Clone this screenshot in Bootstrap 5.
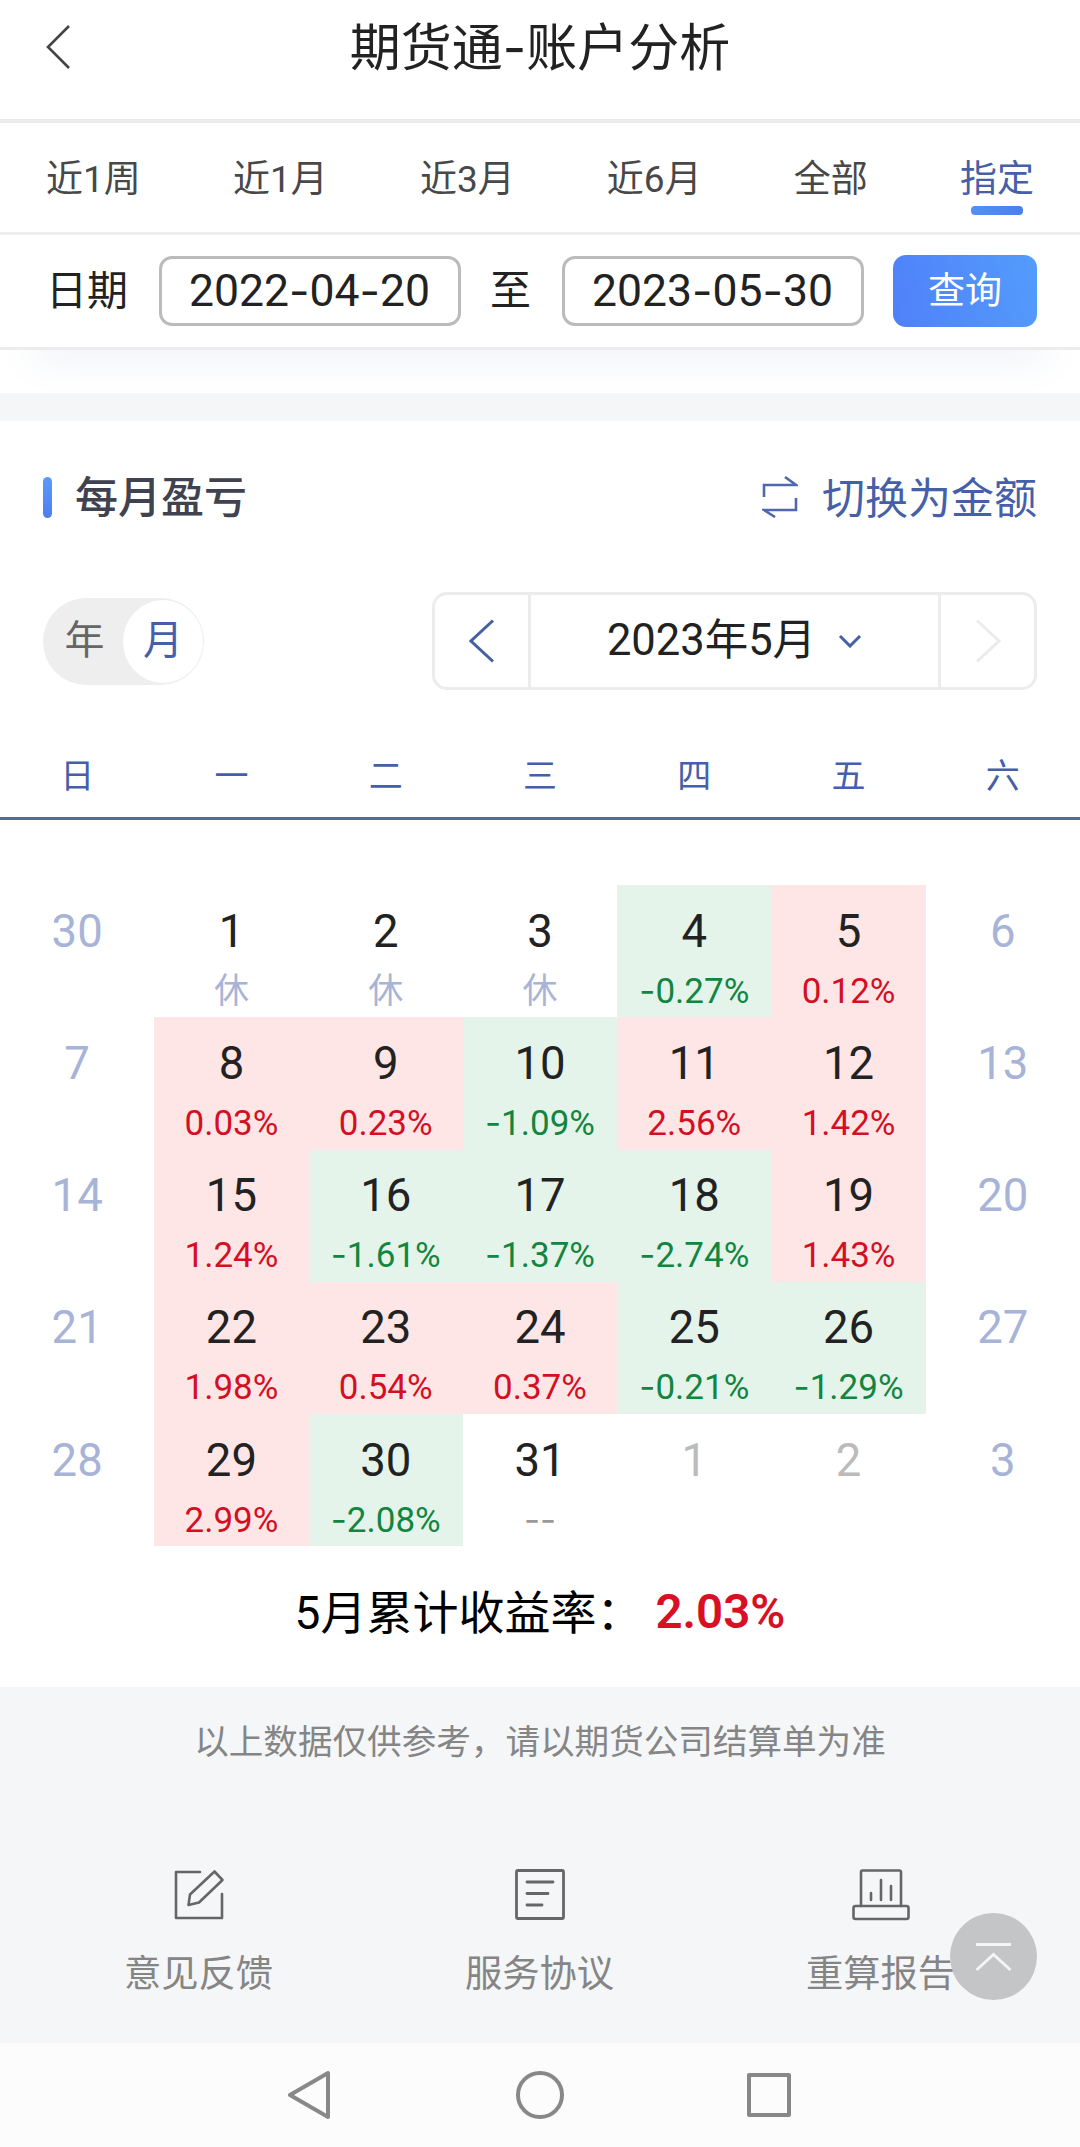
<!DOCTYPE html>
<html lang="zh-CN">
<head>
<meta charset="utf-8">
<meta name="viewport" content="width=device-width, initial-scale=1">
<title>期货通-账户分析</title>
<link rel="stylesheet" href="https://cdn.jsdelivr.net/npm/bootstrap@5.3.0/dist/css/bootstrap.min.css">
<style>
body{font-family:Roboto,"Noto Sans CJK SC",sans-serif;color:#222;background:#fff;width:1080px;overflow-x:hidden;line-height:1}
svg{display:block;fill:none;flex:none}
.hy{font-family:Inter,sans-serif;line-height:0}
.blue{color:#4560a8}
.app-head{height:123px;border-bottom:4px solid #ebebeb;padding:0 46px 25px}
.app-head .ttl{font-size:51px;color:#222;padding-top:2px}
.tabs{height:112px;border-bottom:3px solid #eee;padding:0 46px;font-size:37px;color:#484848}
.tabs .tab{height:100%;padding-top:3px}
.tabs .on::after{content:"";position:absolute;left:50%;bottom:17px;width:52px;height:9px;margin-left:-26px;border-radius:4px;background:linear-gradient(90deg,#5290f5,#4d7df0)}
.filter{height:115px;border-bottom:3px solid #ececec;padding:0 43px 0 46px;font-size:41px}
.date-box{width:302px;height:70px;border:3px solid #bbb;border-radius:13px;font-size:44.5px;margin-right:-1px}
.go{width:144px;height:72px;border:0;border-radius:13px;font-size:37px;color:#fff;background:linear-gradient(75deg,#5080fa,#539cfc)}
.fade-strip{height:43px;padding:0 40px;overflow:hidden}
.fade-strip div{height:10px;margin-top:-10px;box-shadow:0 4px 36px 6px rgba(90,120,180,.12)}
.band{height:28px;background:#f4f6f8}
.sec-head{height:150px;padding:2px 43px 0;font-size:43px}
.sec-head .bar{width:9px;height:41px;border-radius:5px;background:linear-gradient(#5a9bfa,#4f7cf0);margin-right:23px}
.sec-head .name{font-weight:500;color:#40424f;padding-top:2px}
.picker-row{height:140px;padding:0 43px}
.seg{width:161px;height:87px;border-radius:44px;background:#eee;font-size:40px;color:#666}
.seg .knob{width:80px;height:83px;border-radius:50%;background:#fff;margin-right:1px}
.seg .yr{padding-left:3px}
.month{width:605px;height:98px;border:3px solid #ececec;border-radius:15px}
.month .arrow{width:93px}
.month .mid{border-left:3px solid #ececec;border-right:3px solid #ececec;font-size:43.5px}
.month .mid svg{margin-left:22px}
.cols{display:grid;grid-template-columns:repeat(7,1fr)}
.week{height:109px;border-bottom:3px solid #566a95;font-size:34px;padding-top:24px}
.cal{padding-top:65px;grid-auto-rows:132.3px}
.day{padding-top:23.500px}
.day .num{font-size:45.5px;height:46px;line-height:46px}
.day .rate{font-size:35px;height:36px;line-height:36px;margin-top:19px}
.up{background:#fee6e7}.up .rate{color:#d40f24}
.down{background:#e5f4eb}.down .rate{color:#128540}
.rest .rate,.off{color:#a7b4d8}
.next{color:#bbb}.none .rate{color:#999}
.total{height:141px;font-size:46px;color:#000;padding-bottom:8px}
.total b{color:#d90f24;font-size:47.5px;font-weight:600;margin-left:13px}
.foot{height:355.500px;background:#f5f6f8;color:#858585}
.note{height:105px;font-size:34.6px;padding-top:4px}
.links{padding:76px 28px 0;font-size:37.3px}
.links a{color:inherit;text-decoration:none;width:341px}
.links svg{height:54px;width:60px;margin-bottom:34px}
.totop{right:43px;top:226px;width:87px;height:87px;border-radius:50%;background:rgba(190,192,192,.9)}
.sysbar{height:104px;background:#fcfcfc;padding-top:1px}
</style>
</head>
<body>
<header class="app-head d-flex align-items-center">
  <svg width="24" height="44" viewBox="0 0 24 44" stroke="#444" stroke-width="2.6"><path d="M23 1 2 22l21 21"/></svg>
  <div class="ttl flex-fill text-center">期货通<span class="hy">-</span>账户分析</div>
  <span style="width:24px"></span>
</header>
<nav class="tabs d-flex justify-content-between">
  <div class="tab d-flex align-items-center">近1周</div>
  <div class="tab d-flex align-items-center">近1月</div>
  <div class="tab d-flex align-items-center">近3月</div>
  <div class="tab d-flex align-items-center">近6月</div>
  <div class="tab d-flex align-items-center">全部</div>
  <div class="tab on blue position-relative d-flex align-items-center">指定</div>
</nav>
<div class="filter d-flex align-items-center justify-content-between">
  <span>日期</span>
  <div class="date-box d-flex align-items-center justify-content-center">2022<span class="hy">-</span>04<span class="hy">-</span>20</div>
  <span>至</span>
  <div class="date-box d-flex align-items-center justify-content-center">2023<span class="hy">-</span>05<span class="hy">-</span>30</div>
  <button class="go p-0">查询</button>
</div>
<div class="fade-strip"><div></div></div>
<div class="band"></div>

<section>
  <div class="sec-head d-flex align-items-center">
    <span class="bar"></span><span class="name">每月盈亏</span>
    <div class="ms-auto d-flex align-items-center blue">
      <svg class="me-4" width="36" height="42" viewBox="0 0 36 42" stroke="#4f68b0" stroke-width="2.6"><path d="M2 21V9H34L23 1M34 22V34H2L13 41"/></svg>
      <span class="pt-1">切换为金额</span>
    </div>
  </div>
  <div class="picker-row d-flex align-items-center justify-content-between">
    <div class="seg d-flex align-items-center">
      <span class="yr flex-fill text-center">年</span>
      <span class="knob blue d-flex align-items-center justify-content-center">月</span>
    </div>
    <div class="month d-flex">
      <div class="arrow d-flex align-items-center justify-content-center"><svg width="26" height="44" viewBox="0 0 26 44" stroke="#4560a0" stroke-width="3"><path d="M24 1.500 2 22l22 20.500"/></svg></div>
      <div class="mid flex-fill d-flex align-items-center justify-content-center">2023年5月<svg width="24" height="14" viewBox="0 0 24 14" stroke="#4560a8" stroke-width="3"><path d="M2 2l10 10L22 2"/></svg></div>
      <div class="arrow d-flex align-items-center justify-content-center"><svg width="26" height="44" viewBox="0 0 26 44" stroke="#ebebeb" stroke-width="3"><path d="M2 1.500 24 22 2 42.500"/></svg></div>
    </div>
  </div>
  <div class="cols week blue text-center align-items-center">
    <span>日</span><span>一</span><span>二</span><span>三</span><span>四</span><span>五</span><span>六</span>
  </div>
  <div class="cols cal text-center" id="cal"></div>
  <div class="total d-flex align-items-center justify-content-center"><span>5月累计收益率：</span><b>2.03%</b></div>
</section>

<footer class="foot position-relative">
  <div class="note d-flex align-items-center justify-content-center">以上数据仅供参考，请以期货公司结算单为准</div>
  <div class="links d-flex">
    <a class="d-flex flex-column align-items-center"><svg viewBox="0 0 60 54" stroke="#666" stroke-width="2.6" stroke-linejoin="round" stroke-linecap="round"><path d="M31 4H7V50H53V26"/><path d="M45.500 3.500 53.500 12 30 34.500 19.500 37 21 26.500Z"/></svg>意见反馈</a>
    <a class="d-flex flex-column align-items-center"><svg viewBox="0 0 60 54" stroke="#666" stroke-width="2.8" stroke-linecap="round"><rect x="6.500" y="2.500" width="47" height="48" rx="1.500"/><path d="M17 14H43M17 25.500H38M17 37H32"/></svg>服务协议</a>
    <a class="d-flex flex-column align-items-center"><svg viewBox="0 0 60 54" stroke="#666" stroke-width="2.600" stroke-linecap="round"><rect x="2.500" y="38" width="55" height="13" rx="2"/><path d="M10 38V4a1.500 1.500 0 0 1 1.500-1.500H48.500A1.500 1.500 0 0 1 50 4V38M20 25V32M30 12V32M40 18V32"/></svg>重算报告</a>
  </div>
  <div class="totop position-absolute d-flex align-items-center justify-content-center"><svg width="37" height="30" viewBox="0 0 37 30" stroke="#f4f5f5" stroke-width="3"><path d="M1 2.500H36M1.500 28 18.500 12.500 35.500 28"/></svg></div>
</footer>
<div class="sysbar d-flex justify-content-center align-items-center">
  <svg width="504" height="50" viewBox="0 0 504 50" stroke="#888" stroke-width="4" stroke-linejoin="round"><path d="M2 25 40 3V47Z"/><circle cx="252" cy="25" r="22"/><rect x="461" y="5" width="40" height="40"/></svg>
</div>
<script src="https://cdn.jsdelivr.net/npm/bootstrap@5.3.0/dist/js/bootstrap.bundle.min.js"></script>
<script>
// [day, rate or marker]; signed rates pick the cell colour
const days = [
  [30],[1,'休'],[2,'休'],[3,'休'],[4,'-0.27%'],[5,'0.12%'],[6],
  [7],[8,'0.03%'],[9,'0.23%'],[10,'-1.09%'],[11,'2.56%'],[12,'1.42%'],[13],
  [14],[15,'1.24%'],[16,'-1.61%'],[17,'-1.37%'],[18,'-2.74%'],[19,'1.43%'],[20],
  [21],[22,'1.98%'],[23,'0.54%'],[24,'0.37%'],[25,'-0.21%'],[26,'-1.29%'],[27],
  [28],[29,'2.99%'],[30,'-2.08%'],[31,'--'],[1],[2],[3]
];
document.getElementById('cal').innerHTML = days.map(([d, r], i) => {
  let kind = 'up';
  if (!r) kind = i % 7 === 0 || i % 7 === 6 ? 'off' : 'next';
  else if (r === '休') kind = 'rest';
  else if (r === '--') kind = 'none';
  else if (r[0] === '-') kind = 'down';
  const rate = (r || '').replace(/-+/, m => `<span class="hy">${m}</span>`);
  return `<div class="day ${kind}"><div class="num">${d}</div><div class="rate">${rate}</div></div>`;
}).join('');
</script>
</body>
</html>
